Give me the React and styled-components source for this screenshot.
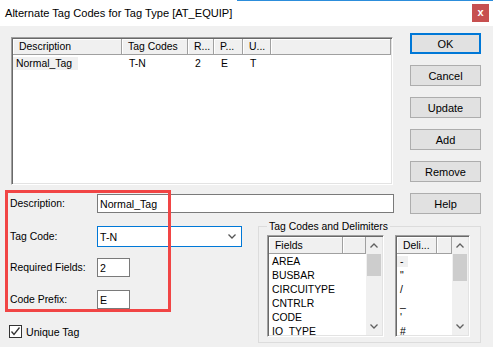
import React from 'react';
import styled, { createGlobalStyle } from 'styled-components';

const GlobalStyle = createGlobalStyle`
  html, body { margin: 0; padding: 0; background: #f0f0f0; }
  body {
    font-family: "Liberation Sans", Arial, sans-serif;
    font-size: 10.4px;
    font-weight: 400;
    color: #000;
  }
  * { box-sizing: border-box; }
`;

const Window = styled.div`
  width: 493px;
  height: 347px;
  overflow: hidden;
  display: flex;
  flex-direction: column;
  background: #f0f0f0;
`;

const TitleBar = styled.div`
  flex: none;
  height: 26px;
  display: flex;
  align-items: center;
  justify-content: space-between;
  padding: 0 4px 0 5px;
  background: linear-gradient(to right, #fff 48%, #2c8ddb 48%) top / 100% 1px no-repeat, #fff;
  font-size: 11.1px;
`;

const CloseButton = styled.span`
  width: 17px;
  height: 18px;
  display: flex;
  align-items: center;
  justify-content: center;
  background: #c75050;
  color: #fff;
  font-weight: bold;
  font-size: 11px;
  padding-bottom: 2px;
`;

const Body = styled.div`
  flex: 1;
  position: relative;
  padding: 7px 12px 0 10px;
  display: flex;
  flex-direction: column;
`;

const Upper = styled.div`
  display: grid;
  grid-template-columns: 384px 71px;
  column-gap: 16px;
  align-items: start;
`;

const LeftCol = styled.div`
  padding-top: 4px;
  display: flex;
  flex-direction: column;
`;

const Sunken = styled.div`
  background: #fff;
  border-top: 1px solid #a0a0a0;
  border-left: 1px solid #a0a0a0;
  border-right: 1px solid #fff;
  border-bottom: 1px solid #fff;
  box-shadow: inset 1px 1px 0 #696969, inset -1px -1px 0 #e3e3e3;
  padding: 1px;
  overflow: hidden;
`;

const ListView = styled(Sunken)`
  margin-left: 1px;
  width: 382px;
  height: 148px;
`;

const HeaderRow = styled.div`
  display: flex;
  height: ${p => p.$h || 16}px;
`;

const HeaderCell = styled.div`
  flex: ${p => (p.$w ? `0 0 ${p.$w}px` : '1')};
  background: #f0f0f0;
  border-right: 1px solid #a0a0a0;
  border-bottom: 1px solid #a0a0a0;
  box-shadow: inset 1px 1px 0 #fff;
  padding-left: 6px;
  display: flex;
  align-items: center;
  white-space: nowrap;
  overflow: hidden;
  font-weight: 400;
`;

const DataRow = styled.div`
  display: flex;
  height: 15px;
  margin-top: 1px;
`;

const DataCell = styled.div`
  flex: 0 0 ${p => p.$w}px;
  padding-left: ${p => (p.$first ? 0 : 7)}px;
  display: flex;
  align-items: center;
  white-space: nowrap;
`;

const Selected = styled.span`
  background: #f0f0f0;
  padding: 1px 6px 1px 3px;
`;

const FieldLine = styled.div`
  display: grid;
  grid-template-columns: 87px auto;
  align-items: center;
  margin-top: ${p => p.$mt || 0}px;
`;

const TextBox = styled.input`
  width: ${p => (p.$w ? `${p.$w}px` : '100%')};
  height: 19px;
  border: 1px solid #7a7a7a;
  background: #fff;
  padding: 0 2px;
  font: inherit;
  font-size: 10.6px;
  color: #000;
  outline: none;
`;

const ButtonCol = styled.div`
  display: flex;
  flex-direction: column;
  gap: 11px;
`;

const Button = styled.button`
  height: 21px;
  width: 71px;
  background: #e1e1e1;
  border: ${p => (p.$primary ? '2px solid #0078d7' : '1px solid #adadad')};
  font-family: inherit;
  font-size: 11px;
  font-weight: 400;
  color: #000;
  padding: 0;
`;

const Lower = styled.div`
  display: flex;
  gap: 16px;
  margin-top: 7px;
`;

const LeftForm = styled.div`
  width: 232px;
  padding-top: 5px;
  display: flex;
  flex-direction: column;
`;

const Combo = styled.div`
  width: 145px;
  height: 21px;
  border: 1px solid #0078d7;
  background: #fff;
  display: flex;
  align-items: center;
  justify-content: space-between;
  padding: 0 5px 0 2px;
  font-size: 10.6px;
`;

const CheckRow = styled.label`
  display: flex;
  align-items: center;
  gap: 4px;
  margin: 16px 0 0 -1px;
  font-size: 10.6px;
`;

const CheckBox = styled.span`
  width: 13px;
  height: 13px;
  border: 1px solid #333;
  background: #fff;
  display: flex;
  align-items: center;
  justify-content: center;
`;

const GroupBox = styled.fieldset`
  width: 223px;
  margin: 0;
  padding: 3px 10px 5px 8px;
  border: 1px solid #dcdcdc;
  display: flex;
  gap: 11px;
  min-width: 0;
`;

const Legend = styled.legend`
  margin-left: 0;
  padding: 0 2px;
  line-height: 11px;
  font-size: 10.4px;
  font-weight: 400;
`;

const ListBox = styled(Sunken)`
  width: ${p => p.$w}px;
  height: 102px;
  display: flex;
`;

const ListMain = styled.div`
  flex: 1;
  min-width: 0;
`;

const Items = styled.div`
  padding-top: 1px;
`;

const Item = styled.div`
  height: 14px;
  line-height: 14px;
  padding-left: 3px;
  white-space: nowrap;
`;

const ItemSel = styled.span`
  background: #f0f0f0;
  padding: 0 5px 0 3px;
  margin-left: -3px;
`;

const ScrollBar = styled.div`
  flex: 0 0 16px;
  background: #f0f0f0;
  display: flex;
  flex-direction: column;
`;

const ScrollArrow = styled.div`
  height: 17px;
  display: flex;
  align-items: center;
  justify-content: center;
`;

const Track = styled.div`
  flex: 1;
`;

const Thumb = styled.div`
  height: ${p => p.$h}px;
  margin: 0 1px;
  background: #cdcdcd;
`;

const RedMark = styled.div`
  position: absolute;
  left: 5px;
  top: 164px;
  width: 166px;
  height: 122px;
  border: 3px solid #f14545;
  pointer-events: none;
`;

const Chevron = ({ up, color = '#606060' }) => (
  <svg width="8" height="5" viewBox="0 0 8 5">
    <polyline
      points={up ? '0.5,4.5 4,1 7.5,4.5' : '0.5,0.5 4,4 7.5,0.5'}
      fill="none"
      stroke={color}
      strokeWidth="1.3"
    />
  </svg>
);

const columns = [
  { w: 109, label: 'Description', value: 'Normal_Tag' },
  { w: 66, label: 'Tag Codes', value: 'T-N' },
  { w: 26, label: 'R...', value: '2' },
  { w: 29, label: 'P...', value: 'E' },
  { w: 28, label: 'U...', value: 'T' },
];

const fields = ['AREA', 'BUSBAR', 'CIRCUITYPE', 'CNTRLR', 'CODE', 'IO_TYPE'];
const delimiters = ['-', '"', '/', '_', "'", '#'];

function SmallList({ width, colWidth, title, items, thumb, selectFirst }) {
  return (
    <ListBox $w={width}>
      <ListMain>
        <HeaderRow $h={17}>
          <HeaderCell $w={colWidth}>{title}</HeaderCell>
          <HeaderCell />
        </HeaderRow>
        <Items>
          {items.map((it, i) => (
            <Item key={i}>{selectFirst && i === 0 ? <ItemSel>{it}</ItemSel> : it}</Item>
          ))}
        </Items>
      </ListMain>
      <ScrollBar>
        <ScrollArrow><Chevron up /></ScrollArrow>
        <Track><Thumb $h={thumb} /></Track>
        <ScrollArrow><Chevron /></ScrollArrow>
      </ScrollBar>
    </ListBox>
  );
}

export default function App() {
  return (
    <Window>
      <GlobalStyle />
      <TitleBar>
        <span>Alternate Tag Codes for Tag Type [AT_EQUIP]</span>
        <CloseButton>x</CloseButton>
      </TitleBar>
      <Body>
        <Upper>
          <LeftCol>
            <ListView>
              <HeaderRow>
                {columns.map(c => (
                  <HeaderCell key={c.label} $w={c.w}>{c.label}</HeaderCell>
                ))}
                <HeaderCell />
              </HeaderRow>
              <DataRow>
                {columns.map((c, i) => (
                  <DataCell key={c.label} $w={c.w} $first={i === 0}>
                    {i === 0 ? <Selected>{c.value}</Selected> : c.value}
                  </DataCell>
                ))}
              </DataRow>
            </ListView>
            <FieldLine $mt={9}>
              <span>Description:</span>
              <TextBox readOnly defaultValue="Normal_Tag" />
            </FieldLine>
          </LeftCol>
          <ButtonCol>
            <Button $primary>OK</Button>
            <Button>Cancel</Button>
            <Button>Update</Button>
            <Button>Add</Button>
            <Button>Remove</Button>
            <Button>Help</Button>
          </ButtonCol>
        </Upper>
        <Lower>
          <LeftForm>
            <FieldLine>
              <span>Tag Code:</span>
              <Combo>
                <span>T-N</span>
                <Chevron color="#555" />
              </Combo>
            </FieldLine>
            <FieldLine $mt={11}>
              <span>Required Fields:</span>
              <TextBox readOnly defaultValue="2" $w={33} />
            </FieldLine>
            <FieldLine $mt={13}>
              <span>Code Prefix:</span>
              <TextBox readOnly defaultValue="E" $w={33} />
            </FieldLine>
            <CheckRow>
              <CheckBox>
                <svg width="11" height="11" viewBox="0 0 11 11">
                  <polyline points="1.5,5.5 4,8.5 9.5,1.5" fill="none" stroke="#333" strokeWidth="1.3" />
                </svg>
              </CheckBox>
              Unique Tag
            </CheckRow>
          </LeftForm>
          <GroupBox>
            <Legend>Tag Codes and Delimiters</Legend>
            <SmallList width={117} colWidth={74} title="Fields" items={fields} thumb={22} />
            <SmallList width={75} colWidth={40} title="Deli..." items={delimiters} thumb={27} selectFirst />
          </GroupBox>
        </Lower>
        <RedMark />
      </Body>
    </Window>
  );
}
